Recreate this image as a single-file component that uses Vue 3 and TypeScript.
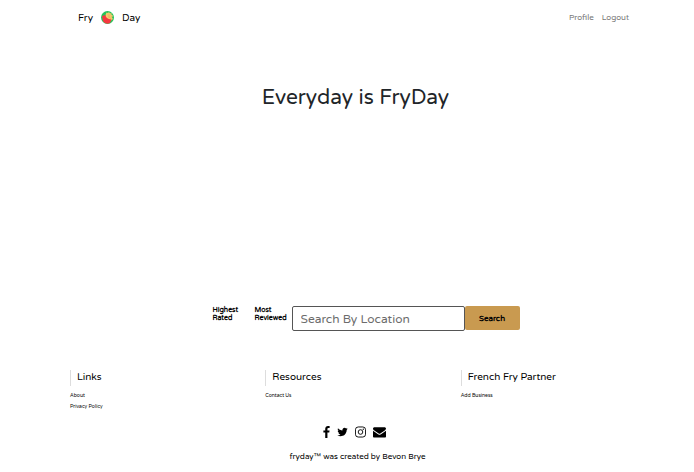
<script setup lang="ts">
import { ref } from 'vue'

interface FooterColumn {
  title: string
  links: string[]
}

const location = ref('')

const columns: FooterColumn[] = [
  { title: 'Links', links: ['About', 'Privacy Policy'] },
  { title: 'Resources', links: ['Contact Us'] },
  { title: 'French Fry Partner', links: ['Add Business'] },
]
</script>

<template>
  <div class="page">
    <header class="nav">
      <a class="brand" href="#">
        <span>Fry</span>
        <svg class="logo" viewBox="0 0 26 26" aria-hidden="true">
          <circle cx="13" cy="13" r="13" fill="#24c45a" />
          <path d="M9 8l2-5 3 1 2-2 2 3 3-1v4l3 1-2 4 2 3-5 4-11-6z" fill="#f5cb6c" />
          <path d="M14 5l1 8M18 6l-1 8M22 10l-4 6" stroke="#e0a552" stroke-width="1" fill="none" />
          <path d="M2 10l7-2c0 5 4 8 12 9l-3 7c-5 3-11 1-14-4z" fill="#f5383f" />
        </svg>
        <span>Day</span>
      </a>
      <nav class="account">
        <a href="#">Profile</a>
        <a href="#">Logout</a>
      </nav>
    </header>

    <main class="hero">
      <h1>Everyday is FryDay</h1>
      <form class="search" @submit.prevent>
        <div class="sorts">
          <a href="#">Highest Rated</a>
          <a href="#">Most Reviewed</a>
        </div>
        <input v-model="location" type="text" aria-label="Search By Location" placeholder="Search By Location" />
        <button type="submit">Search</button>
      </form>
    </main>

    <footer class="footer">
      <div class="columns">
        <section v-for="column in columns" :key="column.title">
          <h2>{{ column.title }}</h2>
          <ul>
            <li v-for="link in column.links" :key="link"><a href="#">{{ link }}</a></li>
          </ul>
        </section>
      </div>
      <div class="social">
        <a href="#" aria-label="Facebook">
          <svg class="narrow" viewBox="479 0 864 1664"><path d="M1343 12v264h-157q-86 0-116 36t-30 108v189h293l-39 296h-254v759h-306v-759h-255v-296h255v-218q0-186 104-288.500t277-102.500q147 0 228 12z" /></svg>
        </a>
        <a href="#" aria-label="Twitter">
          <svg viewBox="60 128 1664 1536"><path d="M1684 408q-67 98-162 167 1 14 1 42 0 130-38 259.500t-115.500 248.500-184.500 210.500-258 146-323 54.500q-271 0-496-145 35 4 78 4 225 0 401-138-105-2-188-64.500t-114-159.500q33 5 61 5 43 0 85-11-112-23-185.500-111.500t-73.500-205.500v-4q68 38 146 41-66-44-105-115t-39-154q0-88 44-163 121 149 294.500 238.500t371.500 99.500q-8-38-8-74 0-134 94.500-228.500t228.500-94.500q140 0 236 102 109-21 205-78-37 115-142 178 93-10 186-50z" /></svg>
        </a>
        <a href="#" aria-label="Instagram">
          <svg viewBox="0 0 24 24">
            <rect x="1" y="1" width="22" height="22" rx="6" fill="none" stroke="#000" stroke-width="2" />
            <circle cx="12" cy="12" r="5" fill="none" stroke="#000" stroke-width="2" />
            <circle cx="18" cy="6" r="1.400" />
          </svg>
        </a>
        <a href="#" aria-label="Email">
          <svg class="wide" viewBox="0 128 1792 1536"><path d="M1792 710v794q0 66-47 113t-113 47h-1472q-66 0-113-47t-47-113v-794q44 49 101 87 362 246 497 345 57 42 92.500 65.500t94.500 48 110 24.500h2q51 0 110-24.500t94.500-48 92.500-65.500q170-123 498-345 57-39 100-87zm0-294q0 79-49 151t-122 123q-376 261-468 325-10 7-42.500 31t-54 38.500-52 32.500-57.500 27-50 9h-2q-23 0-50-9t-57.500-27-52-32.500-54-38.500-42.500-31q-91-64-262-182.500t-205-142.500q-62-42-117-115.500t-55-136.500q0-78 41.500-130t118.500-52h1472q65 0 112.500 47t47.500 113z" /></svg>
        </a>
      </div>
      <p class="credit">fryday™ was created by Bevon Brye</p>
    </footer>
  </div>
</template>

<style>
body {
  background: #fff;
}
</style>

<style scoped>
.page {
  color: #000;
  font-family: 'Varela Round', 'Noto Sans', sans-serif;
}
a {
  color: inherit;
  text-decoration: none;
}
.nav {
  display: flex;
  align-items: center;
  justify-content: space-between;
  height: 35px;
  padding: 0 65px 0 78px;
}
.brand {
  display: flex;
  align-items: center;
  gap: 8px;
  font-size: 10px;
}
.logo {
  width: 13px;
  height: 13px;
}
.account {
  display: flex;
  gap: 8px;
  color: #777;
  font-size: 8px;
}
.hero {
  display: flex;
  flex-direction: column;
  align-items: center;
  padding-left: 17px;
}
h1 {
  margin: 49px 0 0;
  color: #212529;
  font-size: 21px;
  font-weight: 400;
  line-height: 28px;
}
.search {
  display: flex;
  margin-top: 194px;
  padding-left: 21px;
}
.sorts {
  display: grid;
  grid-template-columns: 42px 32px;
  margin-right: 5px;
  font-size: 7px;
  font-weight: 700;
  line-height: 8px;
}
.sorts a {
  width: min-content;
}
input {
  box-sizing: border-box;
  width: 173px;
  height: 25px;
  padding: 0 8px;
  border: 1px solid #555;
  border-radius: 2px;
  background: #fff;
  color: #000;
  font: inherit;
  font-size: 12px;
}
input::placeholder {
  color: #6c6c6c;
  opacity: 1;
}
button {
  width: 55px;
  height: 24px;
  padding: 0;
  border: 0;
  border-radius: 2px;
  background: #c99a50;
  color: #000;
  font: inherit;
  font-size: 8px;
  font-weight: 700;
}
.footer {
  padding: 39px 38px 4px 70px;
}
.columns {
  display: grid;
  grid-template-columns: repeat(3, 1fr);
}
h2 {
  margin: 0;
  padding-bottom: 2px;
  padding-left: 6px;
  border-left: 1px solid #ddd;
  font-size: 10px;
  font-weight: 400;
  line-height: 14px;
}
ul {
  margin: 4px 0 0;
  padding: 0;
  list-style: none;
  font-size: 5px;
  line-height: 11px;
}
.social {
  display: flex;
  justify-content: center;
  gap: 7px;
  margin-top: 14px;
  padding-right: 17px;
}
.social a,
.social svg {
  display: block;
}
.social svg {
  width: 11px;
  height: 12px;
}
.social .narrow {
  width: 7px;
}
.social .wide {
  width: 13px;
}
.credit {
  margin: 13px 0 0;
  padding-right: 11px;
  text-align: center;
  font-size: 8px;
  line-height: 12px;
}
</style>
